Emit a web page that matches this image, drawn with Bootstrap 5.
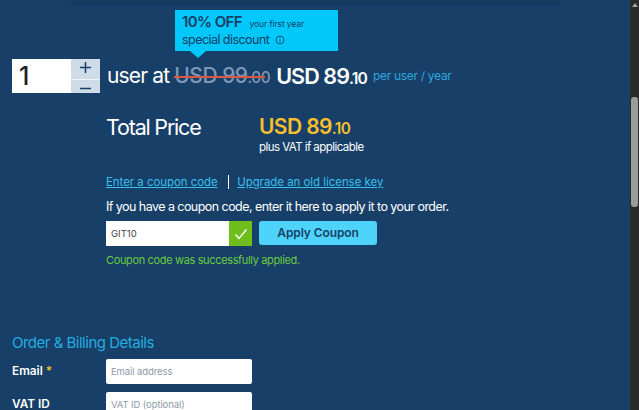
<!DOCTYPE html>
<html lang="en"><head><meta charset="utf-8"><title>Checkout</title>
<link rel="stylesheet" href="https://cdn.jsdelivr.net/npm/bootstrap@5.3.0/dist/css/bootstrap.min.css">
<style>
html,body{height:100%;margin:0;overflow:hidden}
body{background:#173f67;font-family:Inter,"Liberation Sans",sans-serif;color:#fff}
.shell{height:410px;overflow:hidden}
.pane{width:630px;height:410px;overflow:hidden}
.topstrip{height:6px;margin:0 70px 0 71px;background:#153a5f}
.sbar{width:9px;height:410px;background:#2b2b2b;position:relative}
.sbar-arrow{position:absolute;left:2px;top:3px;border-left:3px solid transparent;border-right:3px solid transparent;border-bottom:4px solid #a3a3a3}
.sbar-thumb{position:absolute;left:1px;top:97px;width:7px;height:110px;background:#9b9b9b;border-radius:3px}
.promo{margin-left:175px;margin-top:4px;width:163px;height:41px;background:#00c8fa;color:#173f67;padding:3px 7px;position:relative;line-height:1}
.promo::after{content:"";position:absolute;left:15px;top:41px;border-left:8px solid transparent;border-right:8px solid transparent;border-top:7px solid #00c8fa}
.off{font-size:15px;font-weight:600;letter-spacing:-.6px}
.yr{font-size:8.5px;margin-left:3px;letter-spacing:-.1px}
.spec{font-size:12.5px;margin-top:5px;letter-spacing:-.55px}
.spec svg{margin-left:6px}
.qtyrow{margin:8px 0 0 12px;height:34px}
.qty{width:88px;height:34px}
.qnum{width:59px;background:#fff;font-size:25px;font-weight:500;padding-left:7px;line-height:34px;color:#222}
.qbtns{width:29px;background:#d0dbe8}
.qb{height:17px;position:relative}
.qb+.qb{border-top:1px solid #f0f3f7}
.qb svg{display:block;margin:3px auto 0}
.uat{font-size:21px;margin-left:7px;letter-spacing:-.85px}
.oldp{font-size:21px;font-weight:500;color:#7e97b6;margin-left:5px;letter-spacing:-.5px;position:relative}
.oldp::after{content:"";position:absolute;left:0;right:5px;top:50%;height:2px;background:#d9583e}
.cents{font-size:.73em}
.newp{font-size:21.5px;font-weight:600;margin-left:6px;letter-spacing:-.9px}
.per{font-size:12px;color:#2fa6dd;margin-left:6px;letter-spacing:-.3px}
.totalrow{margin:21px 0 0 106px}
.ttl{width:153px;font-size:21.5px;line-height:26px;letter-spacing:-1.2px}
.amt{font-size:21px;font-weight:600;color:#f9bf2c;line-height:26px;letter-spacing:-.6px}
.vat{font-size:11.5px;line-height:11px;letter-spacing:-.55px}
.lnks{margin:20px 0 0 106px;font-size:11.4px;line-height:18px}
.lnks a{color:#39c0ee}
.pipe{width:1.5px;height:14px;background:#fff;margin:0 8px 0 10px}
.hint{margin:7px 0 0 106px;font-size:12.5px;line-height:18px;letter-spacing:-.55px}
.coupon{margin:5px 0 0 106px;height:25px}
.cinput{width:123px;height:25px;background:#fff;color:#444;font-size:9.5px;line-height:25px;padding-left:5px}
.ccheck{width:23px;height:25px;background:#6fbe1e}
.apply{width:118px;height:24px;margin-left:7px;background:#4ed3fb;color:#173f67;font-size:12px;font-weight:600;letter-spacing:-.1px;border-radius:3px;border:0;padding:0}
.okmsg{margin:7px 0 0 106px;font-size:11px;line-height:15px;letter-spacing:-.35px;color:#6bcc3e}
.billh{margin:65px 0 0 12px;font-size:15px;line-height:20px;letter-spacing:-.5px;color:#22aee0}
.frow{height:25px;margin:6px 0 0 12px}
.frow+.frow{margin-top:8px}
.flabel{width:94px;font-size:11.8px;font-weight:600}
.star{color:#f9bf2c}
.fin{width:146px;height:25px;background:#fff;color:#8d99a8;font-size:9.5px;letter-spacing:-.1px;line-height:25px;padding-left:5px;border-radius:2px}
</style></head>
<body>
<div class="shell d-flex">
<main class="pane">
<div class="topstrip"></div>
<div class="promo">
<div><span class="off">10% OFF</span> <span class="yr">your first year</span></div>
<div class="spec d-flex align-items-center">special discount <svg width="10" height="10" viewBox="0 0 10 10" fill="none" stroke="#173f67" stroke-width=".8"><circle cx="5" cy="5" r="4"/><path d="M5 4.4V7.4M5 2.6V3.4"/></svg></div>
</div>
<div class="qtyrow d-flex align-items-center">
<div class="qty d-flex"><div class="qnum">1</div><div class="qbtns">
<div class="qb"><svg width="11" height="11" viewBox="0 0 11 11" stroke="#173f67" stroke-width="1.5"><path d="M0 5.5H11M5.5 0V11"/></svg></div>
<div class="qb"><svg width="11" height="11" viewBox="0 0 11 11" stroke="#173f67" stroke-width="1.5"><path d="M0 5.5H11"/></svg></div>
</div></div>
<span class="uat">user at</span>
<span class="oldp">USD 99<span class="cents">.00</span></span>
<span class="newp">USD 89<span class="cents">.10</span></span>
<span class="per">per user / year</span>
</div>
<div class="totalrow d-flex">
<div class="ttl">Total Price</div>
<div><div class="amt">USD 89<span class="cents">.10</span></div><div class="vat">plus VAT if applicable</div></div>
</div>
<div class="lnks d-flex align-items-center"><a href="#">Enter a coupon code</a><span class="pipe"></span><a href="#">Upgrade an old license key</a></div>
<div class="hint">If you have a coupon code, enter it here to apply it to your order.</div>
<div class="coupon d-flex">
<div class="cinput">GIT10</div>
<div class="ccheck d-flex align-items-center justify-content-center"><svg width="14" height="12" viewBox="0 0 14 12" fill="none" stroke="#fff" stroke-width="1.4"><path d="M1.5 6.5 5 10.5 12.5 1.5"/></svg></div>
<button class="apply btn" type="button">Apply Coupon</button>
</div>
<div class="okmsg">Coupon code was successfully applied.</div>
<div class="billh">Order &amp; Billing Details</div>
<div class="frow d-flex align-items-center"><div class="flabel">Email <span class="star">*</span></div><div class="fin">Email address</div></div>
<div class="frow d-flex align-items-center"><div class="flabel">VAT ID</div><div class="fin">VAT ID (optional)</div></div>
</main>
<div class="sbar"><span class="sbar-arrow"></span><span class="sbar-thumb"></span></div>
</div>
<script src="https://cdn.jsdelivr.net/npm/bootstrap@5.3.0/dist/js/bootstrap.bundle.min.js"></script>
</body></html>
